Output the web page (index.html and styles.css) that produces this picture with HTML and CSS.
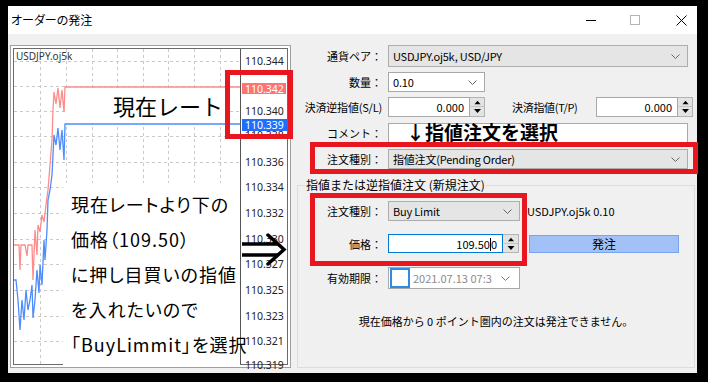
FILE: index.html
```html
<!DOCTYPE html>
<html lang="ja">
<head>
<meta charset="utf-8">
<title>オーダーの発注</title>
<link rel="stylesheet" href="styles.css">
</head>
<body>
<div class="screen">
  <div class="window">
    <div class="titlebar">
      <span class="title">オーダーの発注</span>
      <div class="controls">
        <svg class="ctl ctl-min" width="10" height="10" viewBox="0 0 10 10"><line x1="0" y1="5.5" x2="10" y2="5.5" stroke="#000" stroke-width="1"/></svg>
        <svg class="ctl ctl-max" width="10" height="10" viewBox="0 0 10 10"><rect x="0.5" y="0.5" width="9" height="9" fill="none" stroke="#b4b4b4" stroke-width="1"/></svg>
        <svg class="ctl ctl-close" width="11" height="11" viewBox="0 0 11 11"><path d="M0.5 0.5 L10.5 10.5 M10.5 0.5 L0.5 10.5" stroke="#000" stroke-width="1" fill="none"/></svg>
      </div>
    </div>
    <div class="main">
      <div class="chart-panel">
        <div class="chart">
          <svg class="chart-svg" width="273" height="315" viewBox="0 0 273 315">
            <g stroke="#c9c9c9" stroke-width="1" stroke-dasharray="3 3" fill="none">
              <line x1="0" y1="12.5" x2="226" y2="12.5"/>
              <line x1="0" y1="37.5" x2="226" y2="37.5"/>
              <line x1="0" y1="62.5" x2="226" y2="62.5"/>
              <line x1="0" y1="87.5" x2="226" y2="87.5"/>
              <line x1="0" y1="113.5" x2="226" y2="113.5"/>
              <line x1="0" y1="138.5" x2="226" y2="138.5"/>
              <line x1="0" y1="164.5" x2="226" y2="164.5"/>
              <line x1="0" y1="190.5" x2="226" y2="190.5"/>
              <line x1="0" y1="215.5" x2="226" y2="215.5"/>
              <line x1="0" y1="241.5" x2="226" y2="241.5"/>
              <line x1="0" y1="267.5" x2="226" y2="267.5"/>
              <line x1="0" y1="292.5" x2="226" y2="292.5"/>
              <line x1="26.5" y1="0" x2="26.5" y2="315"/>
              <line x1="52.5" y1="0" x2="52.5" y2="315"/>
              <line x1="78.5" y1="0" x2="78.5" y2="315"/>
              <line x1="103.5" y1="0" x2="103.5" y2="315"/>
              <line x1="129.5" y1="0" x2="129.5" y2="315"/>
              <line x1="154.5" y1="0" x2="154.5" y2="315"/>
              <line x1="180.5" y1="0" x2="180.5" y2="315"/>
              <line x1="206.5" y1="0" x2="206.5" y2="315"/>
            </g>
            <polyline fill="none" stroke="#ff8c8c" stroke-width="1.3" points="226,38 51,38 50,63 48,41 46,59 44,39 42,55 40,43 39,61 38,91 36,116 34,141 32,156 30,173 28,166 26,183 24,176 23,206 21,181 19,231 18,196 14,196 13,207 11,196 7,196 6,221 5,196 0,196"/>
            <polyline fill="none" stroke="#4d8dff" stroke-width="1.3" points="226,75 51,75 50,111 48,81 46,101 44,79 42,96 40,86 39,106 38,126 36,141 34,151 33,181 31,211 30,191 28,236 26,216 25,244 23,221 21,251 19,269 18,236 16,251 14,261 12,241 10,271 8,251 6,281 4,251 2,231 0,231"/>
            <line x1="226.5" y1="0" x2="226.5" y2="315" stroke="#555" stroke-width="1"/>
            <text class="sym" x="2" y="11">USDJPY.oj5k</text>
            <g class="axis">
              <text x="231" y="16">110.344</text>
              <text x="231" y="66">110.340</text>
              <text x="231" y="90">110.338</text>
              <text x="231" y="117">110.336</text>
              <text x="231" y="142">110.334</text>
              <text x="231" y="168">110.332</text>
              <text x="231" y="194">110.330</text>
              <text x="231" y="219">110.327</text>
              <text x="231" y="245">110.325</text>
              <text x="231" y="271">110.323</text>
              <text x="231" y="296">110.321</text>
              <text x="231" y="320">110.319</text>
            </g>
            <rect x="228" y="34" width="44" height="11" fill="#ff7373"/>
            <text class="axis-hl" x="231" y="43.5">110.342</text>
            <rect x="228" y="70" width="45" height="12" fill="#1f6fff"/>
            <text class="axis-hl" x="231" y="80">110.339</text>
          </svg>
        </div>
      </div>
      <div class="form">
        <div class="row row1">
          <span class="lbl">通貨ペア：</span>
          <div class="combo gray w300"><span>USDJPY.oj5k, USD/JPY</span><svg class="chev" width="9" height="5" viewBox="0 0 9 5"><polyline points="0.5,0.5 4.5,4.5 8.5,0.5" fill="none" stroke="#666" stroke-width="1"/></svg></div>
        </div>
        <div class="row row2">
          <span class="lbl">数量：</span>
          <div class="combo white w97"><span>0.10</span><svg class="chev" width="9" height="5" viewBox="0 0 9 5"><polyline points="0.5,0.5 4.5,4.5 8.5,0.5" fill="none" stroke="#666" stroke-width="1"/></svg></div>
        </div>
        <div class="row row3">
          <span class="lbl">決済逆指値(S/L)</span>
          <div class="spin">
            <div class="spin-input">0.000</div>
            <div class="spin-btns">
              <svg width="13" height="8" viewBox="0 0 13 8"><polygon points="3,6 10,6 6.5,2" fill="#000"/></svg>
              <svg width="13" height="8" viewBox="0 0 13 8"><polygon points="3,2 10,2 6.5,6" fill="#000"/></svg>
            </div>
          </div>
          <span class="lbl2">決済指値(T/P)</span>
          <div class="spin">
            <div class="spin-input">0.000</div>
            <div class="spin-btns">
              <svg width="13" height="8" viewBox="0 0 13 8"><polygon points="3,6 10,6 6.5,2" fill="#000"/></svg>
              <svg width="13" height="8" viewBox="0 0 13 8"><polygon points="3,2 10,2 6.5,6" fill="#000"/></svg>
            </div>
          </div>
        </div>
        <div class="row row4">
          <span class="lbl">コメント：</span>
          <div class="textbox w300"></div>
        </div>
        <div class="row row5">
          <span class="lbl">注文種別：</span>
          <div class="combo gray w300"><span>指値注文(Pending Order)</span><svg class="chev" width="9" height="5" viewBox="0 0 9 5"><polyline points="0.5,0.5 4.5,4.5 8.5,0.5" fill="none" stroke="#666" stroke-width="1"/></svg></div>
        </div>
        <div class="group">
          <span class="group-title">指値または逆指値注文 (新規注文)</span>
          <div class="grow g1">
            <span class="glbl">注文種別：</span>
            <div class="combo gray w132"><span>Buy Limit</span><svg class="chev" width="9" height="5" viewBox="0 0 9 5"><polyline points="0.5,0.5 4.5,4.5 8.5,0.5" fill="none" stroke="#666" stroke-width="1"/></svg></div>
            <span class="sym-info">USDJPY.oj5k 0.10</span>
          </div>
          <div class="grow g2">
            <span class="glbl">価格：</span>
            <div class="spin">
              <div class="spin-input focus w115">109.50<span class="caret"></span>0</div>
              <div class="spin-btns">
                <svg width="14" height="8" viewBox="0 0 14 8"><polygon points="3.5,6 10.5,6 7,2" fill="#000"/></svg>
                <svg width="14" height="8" viewBox="0 0 14 8"><polygon points="3.5,2 10.5,2 7,6" fill="#000"/></svg>
              </div>
            </div>
            <div class="btn">発注</div>
          </div>
          <div class="grow g3">
            <span class="glbl">有効期限：</span>
            <div class="datebox">
              <span class="check"></span>
              <span class="date">2021.07.13 07:3</span>
              <svg class="chev" width="9" height="5" viewBox="0 0 9 5"><polyline points="0.5,0.5 4.5,4.5 8.5,0.5" fill="none" stroke="#777" stroke-width="1"/></svg>
            </div>
          </div>
          <div class="msg">現在価格から 0 ポイント圏内の注文は発注できません。</div>
        </div>
      </div>
    </div>
  </div>

  <div class="note note-rate">現在レート</div>
  <div class="note note-big">現在レートより下の<br>価格（109.50）<br>に押し目買いの指値<br>を入れたいので<br>「BuyLimmit」を選択</div>
  <div class="note note-type">↓指値注文を選択</div>
  <svg class="arrow" width="48" height="36" viewBox="0 0 48 36">
    <path d="M2 12 H38 M2 23 H38" stroke="#000" stroke-width="3.5" fill="none"/>
    <path d="M28 3 L44 17.5 L28 32" stroke="#000" stroke-width="3.5" fill="none" stroke-linecap="round" stroke-linejoin="miter"/>
  </svg>
  <div class="redbox rb1"></div>
  <div class="redbox rb2"></div>
  <div class="redbox rb3"></div>
</div>
</body>
</html>
```

FILE: styles.css
```css
* { box-sizing: border-box; }
html, body { margin: 0; padding: 0; }
body {
  background: #000;
  width: 708px;
  height: 382px;
  overflow: hidden;
  font-family: "Noto Sans CJK JP", "Noto Sans", sans-serif;
  font-size: 11px;
  color: #000;
}
.screen {
  position: relative;
  width: 708px;
  height: 382px;
  padding: 6px 11px 0 8px;
}
.window {
  width: 689px;
  height: 367px;
  background: #f0f0f0;
  display: flex;
  flex-direction: column;
}
.titlebar {
  height: 28px;
  flex: none;
  background: #fff;
  display: flex;
  align-items: center;
  padding-left: 3px;
}
.title {
  flex: 1;
  font-size: 12px;
  font-feature-settings: "palt";
  line-height: 16px;
}
.controls {
  display: flex;
  align-items: center;
  padding-right: 10px;
}
.ctl { display: block; }
.ctl-min { margin-right: 34px; }
.ctl-max { margin-right: 36px; }
.main {
  display: flex;
  padding: 11px 0 0 2px;
  gap: 5px;
}
.chart-panel {
  width: 281px;
  height: 323px;
  border: 1px solid #a0a0a0;
  padding: 2px;
  background: #fff;
  flex: none;
}
.chart {
  width: 100%;
  height: 100%;
  border: 1px solid #6a6a6a;
  background: #fff;
}
.chart-svg { display: block; overflow: visible; }
.sym { font-family: "Noto Sans", sans-serif; font-size: 10px; fill: #333; }
.axis text { font-family: "Noto Sans", sans-serif; font-size: 10.5px; fill: #222; }
.axis-hl { font-family: "Noto Sans", sans-serif; font-size: 10.5px; fill: #fff; }

.form { width: 401px; flex: none; }
.row {
  display: flex;
  align-items: center;
  height: 20px;
  gap: 6px;
}
.row1 { height: 22px; }
.row2 { margin-top: 5px; }
.row3 { margin-top: 5px; }
.row4 { margin-top: 6px; }
.row5 { margin-top: 6px; }
.lbl {
  width: 86px;
  flex: none;
  text-align: right;
  white-space: nowrap;
  color: #000;
}
.row3 .lbl { letter-spacing: -0.2px; }
.lbl2 {
  margin-left: 21px;
  width: 78px;
  white-space: nowrap;
  letter-spacing: -0.3px;
}
.combo {
  height: 100%;
  display: flex;
  align-items: center;
  justify-content: space-between;
  padding: 0 7px 0 4px;
  border: 1px solid #adadad;
  white-space: nowrap;
  letter-spacing: -0.2px;
}
.combo.gray { background: #e5e5e5; }
.combo.white { background: #fff; border-color: #a8a8a8; }
.w300 { width: 300px; }
.w97 { width: 97px; }
.w132 { width: 132px; }
.chev { display: block; flex: none; }
.textbox {
  height: 100%;
  background: #fff;
  border: 1px solid #a8a8a8;
}
.spin {
  display: flex;
  height: 100%;
}
.spin-input {
  width: 82px;
  height: 100%;
  background: #fff;
  border: 1px solid #a8a8a8;
  text-align: right;
  padding-right: 5px;
  line-height: 18px;
}
.spin-input.w115 { width: 115px; }
.spin-input.focus { border-color: #0078d7; }
.caret {
  display: inline-block;
  width: 1px;
  height: 13px;
  background: #000;
  vertical-align: -2px;
}
.spin-btns {
  width: 15px;
  height: 100%;
  display: flex;
  flex-direction: column;
  justify-content: center;
  align-items: center;
  background: #e3e3e3;
  border: 1px solid #b4b4b4;
  border-left: none;
}
.g2 .spin-btns { width: 16px; }
.spin-btns svg { display: block; }
.spin-btns svg:first-child { border-bottom: 1px solid #c4c4c4; }

.group {
  position: relative;
  margin: 16px 0 0 1px;
  width: 398px;
  height: 183px;
  border: 1px solid #dcdcdc;
  padding-top: 15px;
}
.group-title {
  position: absolute;
  top: -9px;
  left: 7px;
  padding: 0 1px;
  background: #f0f0f0;
  font-size: 12px;
  line-height: 16px;
  white-space: nowrap;
}
.grow {
  display: flex;
  align-items: center;
  gap: 6px;
  height: 20px;
}
.glbl {
  width: 84px;
  flex: none;
  text-align: right;
  white-space: nowrap;
}
.g2 { margin-top: 13px; height: 19px; }
.g3 { margin-top: 14px; height: 22px; }
.sym-info { margin-left: 1px; white-space: nowrap; }
.btn {
  margin-left: 4px;
  width: 150px;
  height: 18px;
  background: #a2c1f6;
  border: 1px solid #7aa3ee;
  display: flex;
  align-items: center;
  justify-content: center;
  font-size: 12px;
}
.datebox {
  width: 132px;
  height: 100%;
  background: #fff;
  border: 1px solid #a8a8a8;
  display: flex;
  align-items: center;
  padding: 0 9px 0 1px;
}
.check {
  width: 20px;
  height: 20px;
  border: 2px solid #2f8be0;
  background: #fff;
  flex: none;
}
.date {
  flex: 1;
  margin-left: 3px;
  color: #8a8a8a;
  white-space: nowrap;
}
.msg {
  margin-top: 24px;
  text-align: center;
  line-height: 16px;
  white-space: nowrap;
}

.note {
  position: absolute;
  white-space: nowrap;
  color: #000;
}
.note-rate {
  left: 66px;
  top: 88px;
  width: 160px;
  height: 35px;
  background: #fff;
  padding-left: 47px;
  font-size: 22px;
  line-height: 35px;
}
.note-big {
  left: 63px;
  top: 183px;
  width: 177px;
  height: 184px;
  background: #fff;
  padding: 4px 0 0 8px;
  font-size: 18px;
  line-height: 35px;
  font-feature-settings: "palt";
  letter-spacing: 1px;
}
.note-type {
  left: 406px;
  top: 120px;
  font-size: 19px;
  font-weight: bold;
  line-height: 24px;
}
.arrow {
  position: absolute;
  left: 240px;
  top: 232px;
}
.redbox {
  position: absolute;
  border: 5px solid #e8161e;
}
.rb1 { left: 225px; top: 70px; width: 68px; height: 69px; }
.rb2 { left: 310px; top: 142px; width: 388px; height: 32px; }
.rb3 { left: 310px; top: 193px; width: 217px; height: 73px; }
```
